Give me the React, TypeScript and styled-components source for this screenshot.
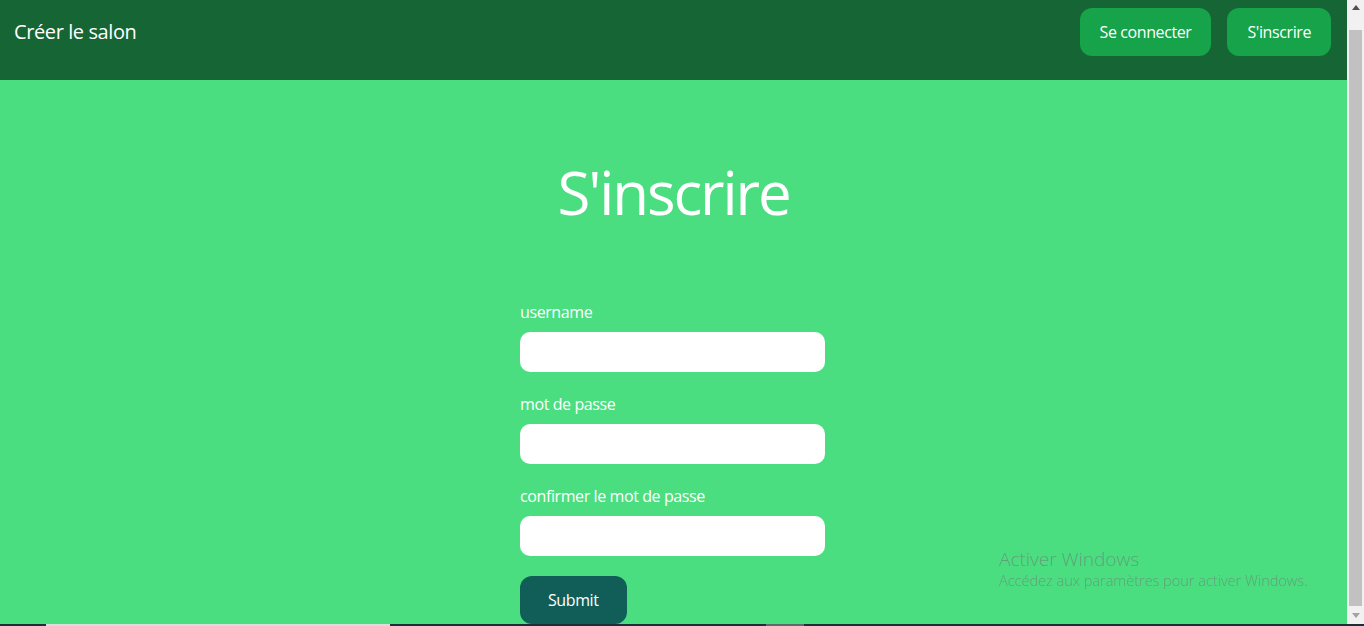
import React from "react";
import styled, { createGlobalStyle } from "styled-components";

const GlobalStyle = createGlobalStyle`
  html, body {
    margin: 0;
    padding: 0;
    background: #4ade80;
    font-family: "Open Sans", "Noto Sans", sans-serif;
    letter-spacing: -0.025em;
    overflow: hidden;
  }
  * { box-sizing: border-box; }
`;

const Window = styled.div`
  display: flex;
  height: 100vh;
`;

const Page = styled.div`
  flex: 1;
  min-width: 0;
  height: 100vh;
  overflow: hidden;
  background: #4ade80;
`;

const Header = styled.header`
  height: 80px;
  display: flex;
  align-items: center;
  justify-content: space-between;
  padding: 8px 16px 24px 14px;
  background: #166534;
`;

const Brand = styled.span`
  color: #ffffff;
  font-size: 20px;
  line-height: 28px;
`;

const Nav = styled.nav`
  display: flex;
  gap: 16px;
`;

const NavButton = styled.button`
  border: none;
  border-radius: 12px;
  background: #16a34a;
  color: #ffffff;
  font-family: inherit;
  letter-spacing: inherit;
  font-size: 16px;
  line-height: 24px;
  padding: 12px 20px;
  cursor: pointer;
`;

const Main = styled.main`
  display: flex;
  flex-direction: column;
  align-items: center;
  padding: 82px 0 16px;
`;

const Title = styled.h1`
  margin: 0 0 78px;
  color: #ffffff;
  font-size: 60px;
  line-height: 60px;
  font-weight: 400;
  letter-spacing: -0.035em;
`;

const Form = styled.form`
  width: 305px;
  margin-right: 2px;
  display: flex;
  flex-direction: column;
`;

const Field = styled.div`
  display: flex;
  flex-direction: column;
  margin-bottom: 20px;
`;

const Label = styled.label`
  color: #ffffff;
  font-size: 16px;
  line-height: 24px;
  margin-bottom: 8px;
`;

const Input = styled.input`
  height: 40px;
  border: none;
  border-radius: 10px;
  background: #ffffff;
  padding: 0 12px;
  font-family: inherit;
  font-size: 16px;
  outline: none;
`;

const Submit = styled.button`
  align-self: flex-start;
  border: none;
  border-radius: 12px;
  background: #115e59;
  color: #ffffff;
  font-family: inherit;
  letter-spacing: inherit;
  font-size: 16px;
  line-height: 24px;
  padding: 12px 28px;
  cursor: pointer;
`;

const ScrollRail = styled.div`
  width: 17px;
  flex: none;
  height: 100vh;
  display: flex;
  flex-direction: column;
  background: #f1f1f1;
`;

const ScrollButton = styled.div<{ $pad: number }>`
  height: 17px;
  flex: none;
  display: flex;
  justify-content: center;
  align-items: flex-start;
  padding-top: ${(p) => p.$pad}px;
`;

const ScrollTrack = styled.div`
  flex: 1;
  display: flex;
  flex-direction: column;
  padding: 13px 2px 3px;
`;

const ScrollThumb = styled.div`
  flex: 1;
  background: #c1c1c1;
`;

const Watermark = styled.div`
  position: fixed;
  left: 999px;
  top: 547px;
  color: rgba(110, 120, 115, 0.6);
  pointer-events: none;
  letter-spacing: 0;
`;

const WatermarkTitle = styled.div`
  font-size: 19px;
  line-height: 24px;
  font-weight: 300;
`;

const WatermarkText = styled.div`
  font-size: 14.5px;
  line-height: 20px;
  font-weight: 300;
`;

const Taskbar = styled.div`
  position: fixed;
  left: 0;
  right: 0;
  bottom: 0;
  height: 2px;
  display: flex;
  background: #1d2e3a;
`;

const TaskSegment = styled.div<{ $w: number; $c: string }>`
  width: ${(p) => p.$w}px;
  flex: none;
  background: ${(p) => p.$c};
`;

const fields = [
  { id: "username", label: "username", type: "text" },
  { id: "password", label: "mot de passe", type: "password" },
  { id: "confirm", label: "confirmer le mot de passe", type: "password" },
];

export default function App() {
  return (
    <Window>
      <GlobalStyle />
      <Page>
        <Header>
          <Brand>Créer le salon</Brand>
          <Nav>
            <NavButton>Se connecter</NavButton>
            <NavButton>S'inscrire</NavButton>
          </Nav>
        </Header>
        <Main>
          <Title>S'inscrire</Title>
          <Form onSubmit={(e) => e.preventDefault()}>
            {fields.map((f) => (
              <Field key={f.id}>
                <Label htmlFor={f.id}>{f.label}</Label>
                <Input id={f.id} type={f.type} />
              </Field>
            ))}
            <Submit type="submit">Submit</Submit>
          </Form>
        </Main>
      </Page>
      <ScrollRail>
        <ScrollButton $pad={5}>
          <svg width="8" height="5" viewBox="0 0 8 5">
            <polygon points="0,5 4,0 8,5" fill="#505050" />
          </svg>
        </ScrollButton>
        <ScrollTrack>
          <ScrollThumb />
        </ScrollTrack>
        <ScrollButton $pad={4}>
          <svg width="8" height="5" viewBox="0 0 8 5">
            <polygon points="0,0 8,0 4,5" fill="#a3a3a3" />
          </svg>
        </ScrollButton>
      </ScrollRail>
      <Watermark>
        <WatermarkTitle>Activer Windows</WatermarkTitle>
        <WatermarkText>Accédez aux paramètres pour activer Windows.</WatermarkText>
      </Watermark>
      <Taskbar>
        <TaskSegment $w={46} $c="#1d2e3a" />
        <TaskSegment $w={344} $c="#dcdcdc" />
        <TaskSegment $w={376} $c="#1d2e3a" />
        <TaskSegment $w={38} $c="#5d6b6b" />
      </Taskbar>
    </Window>
  );
}
